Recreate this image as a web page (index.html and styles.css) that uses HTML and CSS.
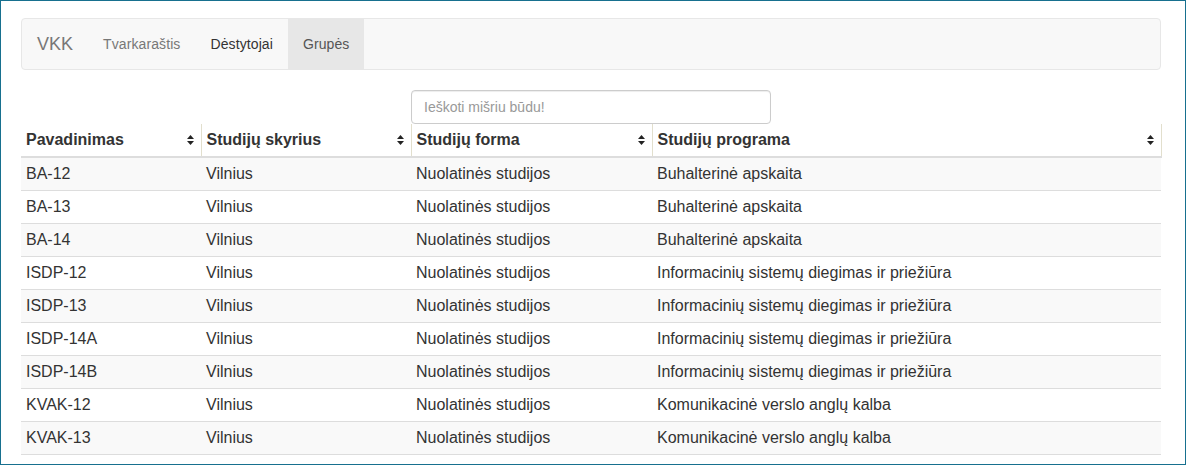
FILE: index.html
```html
<!DOCTYPE html>
<html lang="lt">
<head>
<meta charset="utf-8">
<title>VKK – Grupės</title>
<link rel="stylesheet" href="styles.css">
</head>
<body>
<div class="frame">
  <div class="page">
    <nav class="navbar">
      <a class="brand" href="#">VKK</a>
      <ul class="nav">
        <li><a href="#">Tvarkaraštis</a></li>
        <li class="hover"><a href="#">Dėstytojai</a></li>
        <li class="active"><a href="#">Grupės</a></li>
      </ul>
    </nav>

    <div class="search">
      <input class="form-control" type="text" placeholder="Ieškoti mišriu būdu!">
    </div>

    <table class="table">
      <colgroup>
        <col class="c1"><col class="c2"><col class="c3"><col class="c4">
      </colgroup>
      <thead>
        <tr>
          <th><div class="th-in"><span>Pavadinimas</span><svg class="sort" viewBox="0 0 7 10" width="7" height="10"><polygon points="0,4 3.5,0 7,4"/><polygon points="0,6 3.5,10 7,6"/></svg></div></th>
          <th><div class="th-in"><span>Studijų skyrius</span><svg class="sort" viewBox="0 0 7 10" width="7" height="10"><polygon points="0,4 3.5,0 7,4"/><polygon points="0,6 3.5,10 7,6"/></svg></div></th>
          <th><div class="th-in"><span>Studijų forma</span><svg class="sort" viewBox="0 0 7 10" width="7" height="10"><polygon points="0,4 3.5,0 7,4"/><polygon points="0,6 3.5,10 7,6"/></svg></div></th>
          <th><div class="th-in"><span>Studijų programa</span><svg class="sort" viewBox="0 0 7 10" width="7" height="10"><polygon points="0,4 3.5,0 7,4"/><polygon points="0,6 3.5,10 7,6"/></svg></div></th>
        </tr>
      </thead>
      <tbody>
        <tr><td>BA-12</td><td>Vilnius</td><td>Nuolatinės studijos</td><td>Buhalterinė apskaita</td></tr>
        <tr><td>BA-13</td><td>Vilnius</td><td>Nuolatinės studijos</td><td>Buhalterinė apskaita</td></tr>
        <tr><td>BA-14</td><td>Vilnius</td><td>Nuolatinės studijos</td><td>Buhalterinė apskaita</td></tr>
        <tr><td>ISDP-12</td><td>Vilnius</td><td>Nuolatinės studijos</td><td>Informacinių sistemų diegimas ir priežiūra</td></tr>
        <tr><td>ISDP-13</td><td>Vilnius</td><td>Nuolatinės studijos</td><td>Informacinių sistemų diegimas ir priežiūra</td></tr>
        <tr><td>ISDP-14A</td><td>Vilnius</td><td>Nuolatinės studijos</td><td>Informacinių sistemų diegimas ir priežiūra</td></tr>
        <tr><td>ISDP-14B</td><td>Vilnius</td><td>Nuolatinės studijos</td><td>Informacinių sistemų diegimas ir priežiūra</td></tr>
        <tr><td>KVAK-12</td><td>Vilnius</td><td>Nuolatinės studijos</td><td>Komunikacinė verslo anglų kalba</td></tr>
        <tr><td>KVAK-13</td><td>Vilnius</td><td>Nuolatinės studijos</td><td>Komunikacinė verslo anglų kalba</td></tr>
      </tbody>
    </table>
  </div>
</div>
</body>
</html>
```

FILE: styles.css
```css
* { box-sizing: border-box; }

html, body {
  margin: 0;
  padding: 0;
  background: #fff;
}

body {
  font-family: "Liberation Sans", Arial, Helvetica, sans-serif;
  font-size: 14px;
  line-height: 20px;
  color: #333;
}

.frame {
  width: 1186px;
  height: 465px;
  border: 1px solid #17708f;
  overflow: hidden;
}

.page {
  width: 1140px;
  margin-left: 20px;
  padding-top: 17px;
}

/* Navbar */
.navbar {
  display: flex;
  align-items: stretch;
  height: 52px;
  background: #f8f8f8;
  border: 1px solid #e7e7e7;
  border-radius: 4px;
}

.brand {
  display: block;
  padding: 15px;
  font-size: 18px;
  line-height: 20px;
  color: #777;
  text-decoration: none;
}

.nav {
  display: flex;
  list-style: none;
  margin: 0;
  padding: 0;
}

.nav a {
  display: block;
  padding: 15px;
  line-height: 20px;
  font-size: 14px;
  letter-spacing: 0.1px;
  color: #777;
  text-decoration: none;
}

.nav .hover a { color: #333; }

.nav .active a {
  background: #e7e7e7;
  color: #555;
}

/* Search */
.search {
  display: flex;
  justify-content: center;
  margin-top: 20px;
}

.form-control {
  width: 360px;
  height: 34px;
  padding: 6px 12px;
  font-family: inherit;
  font-size: 14px;
  line-height: 20px;
  color: #555;
  background: #fff;
  border: 1px solid #ccc;
  border-radius: 4px;
  box-shadow: inset 0 1px 1px rgba(0,0,0,.075);
  outline: none;
}

.form-control::placeholder { color: #999; }

/* Table */
.table {
  width: 1140px;
  border-collapse: collapse;
  border-spacing: 0;
  table-layout: fixed;
  font-size: 16px;
}

.c1 { width: 180px; }
.c2 { width: 210px; }
.c3 { width: 241px; }
.c4 { width: 509px; }

.table th {
  padding: 6px 7px 6px 5px;
  line-height: 20px;
  font-weight: bold;
  text-align: left;
  border-right: 1px solid #e2dfcd;
  border-bottom: 2px solid #ddd;
  vertical-align: middle;
}

.th-in {
  display: flex;
  align-items: center;
  justify-content: space-between;
}

.sort { fill: #222; flex: none; }

.table td {
  padding: 6px 5px;
  line-height: 20px;
  border-bottom: 1px solid #ddd;
  white-space: nowrap;
}

.table tbody tr:nth-child(odd) td { background: #f9f9f9; }
```
